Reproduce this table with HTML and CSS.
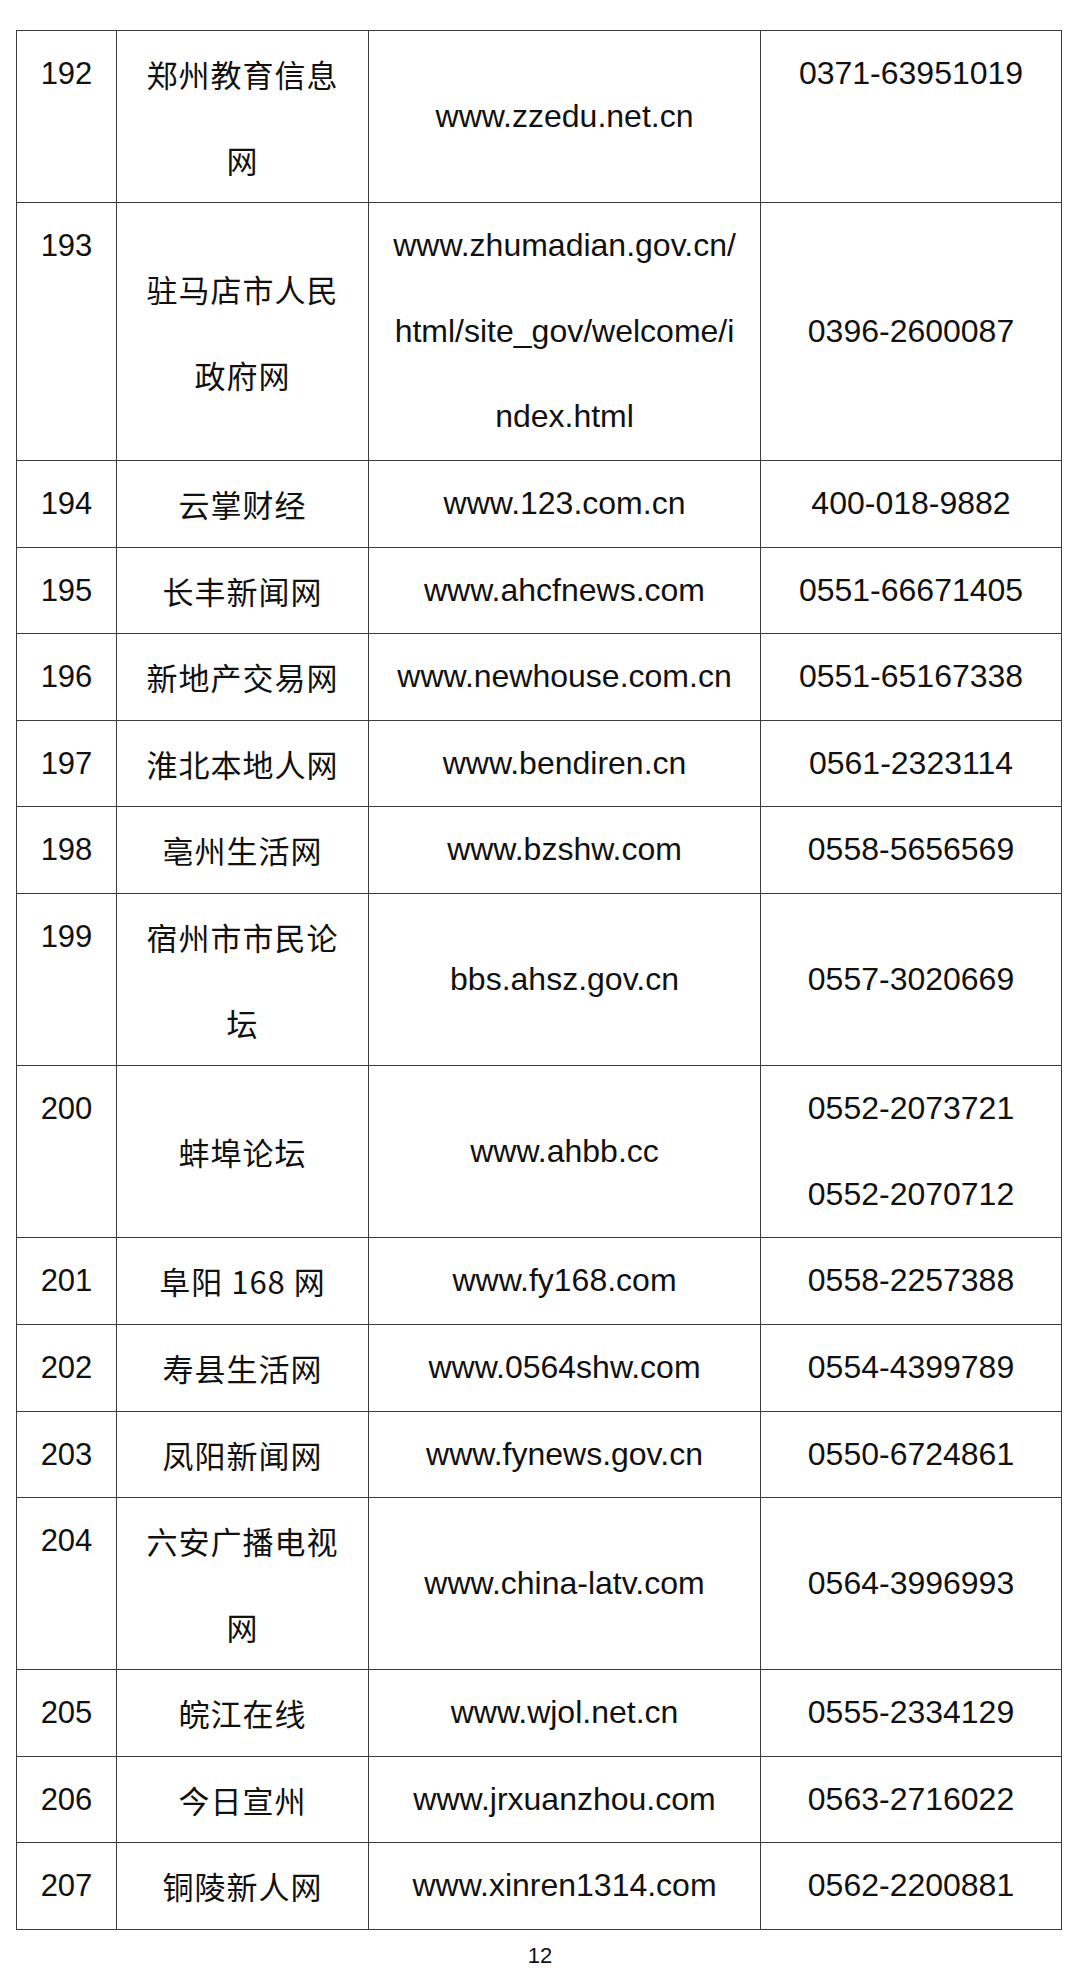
FILE: index.html
```html
<!DOCTYPE html>
<html lang="zh-CN">
<head>
<meta charset="utf-8">
<title>网站列表 12</title>
<link rel="stylesheet" href="styles.css">
</head>
<body>
<div class="page">
<table class="sites">
  <colgroup>
    <col class="c-no"><col class="c-name"><col class="c-url"><col class="c-tel">
  </colgroup>
  <tbody>
    <tr><td class="no">192</td><td class="name">郑州教育信息<br>网</td><td class="url">www.zzedu.net.cn</td><td class="tel top">0371-63951019</td></tr>
    <tr><td class="no">193</td><td class="name">驻马店市人民<br>政府网</td><td class="url">www.zhumadian.gov.cn/<br>html/site_gov/welcome/i<br>ndex.html</td><td class="tel">0396-2600087</td></tr>
    <tr><td class="no">194</td><td class="name">云掌财经</td><td class="url">www.123.com.cn</td><td class="tel">400-018-9882</td></tr>
    <tr><td class="no">195</td><td class="name">长丰新闻网</td><td class="url">www.ahcfnews.com</td><td class="tel">0551-66671405</td></tr>
    <tr><td class="no">196</td><td class="name">新地产交易网</td><td class="url">www.newhouse.com.cn</td><td class="tel">0551-65167338</td></tr>
    <tr><td class="no">197</td><td class="name">淮北本地人网</td><td class="url">www.bendiren.cn</td><td class="tel">0561-2323114</td></tr>
    <tr><td class="no">198</td><td class="name">亳州生活网</td><td class="url">www.bzshw.com</td><td class="tel">0558-5656569</td></tr>
    <tr><td class="no">199</td><td class="name">宿州市市民论<br>坛</td><td class="url">bbs.ahsz.gov.cn</td><td class="tel">0557-3020669</td></tr>
    <tr><td class="no">200</td><td class="name">蚌埠论坛</td><td class="url">www.ahbb.cc</td><td class="tel">0552-2073721<br>0552-2070712</td></tr>
    <tr><td class="no">201</td><td class="name">阜阳 168 网</td><td class="url">www.fy168.com</td><td class="tel">0558-2257388</td></tr>
    <tr><td class="no">202</td><td class="name">寿县生活网</td><td class="url">www.0564shw.com</td><td class="tel">0554-4399789</td></tr>
    <tr><td class="no">203</td><td class="name">凤阳新闻网</td><td class="url">www.fynews.gov.cn</td><td class="tel">0550-6724861</td></tr>
    <tr><td class="no">204</td><td class="name">六安广播电视<br>网</td><td class="url">www.china-latv.com</td><td class="tel">0564-3996993</td></tr>
    <tr><td class="no">205</td><td class="name">皖江在线</td><td class="url">www.wjol.net.cn</td><td class="tel">0555-2334129</td></tr>
    <tr><td class="no">206</td><td class="name">今日宣州</td><td class="url">www.jrxuanzhou.com</td><td class="tel">0563-2716022</td></tr>
    <tr><td class="no">207</td><td class="name">铜陵新人网</td><td class="url">www.xinren1314.com</td><td class="tel">0562-2200881</td></tr>
  </tbody>
</table>
<div class="pagenum">12</div>
</div>
</body>
</html>
```

FILE: styles.css
```css
html, body {
  margin: 0;
  padding: 0;
  background: #ffffff;
}

.page {
  width: 1080px;
  padding-top: 30px;
  font-family: "Liberation Sans", Arial, "Noto Sans CJK SC", sans-serif;
  color: #111111;
}

.sites {
  margin-left: 16px;
  width: 1045px;
  border-collapse: collapse;
  table-layout: fixed;
}

.c-no { width: 100px; }
.c-name { width: 252px; }
.c-url { width: 392px; }
.c-tel { width: 301px; }

.sites td {
  border: 1px solid #3c3c3c;
  padding: 0;
  text-align: center;
  vertical-align: middle;
  font-size: 32px;
  line-height: 85.6px;
  white-space: nowrap;
}

.sites td.no {
  vertical-align: top;
  font-size: 31px;
}

.sites td.name {
  font-family: "Noto Sans CJK SC", "Liberation Sans", sans-serif;
  font-size: 31px;
  letter-spacing: 1px;
}

.sites td.top {
  vertical-align: top;
}

.pagenum {
  text-align: center;
  margin-top: 13px;
  padding-left: 0;
  font-family: "Liberation Sans Narrow", "Liberation Sans", sans-serif;
  font-size: 22px;
  line-height: 26px;
  color: #111111;
}
```
